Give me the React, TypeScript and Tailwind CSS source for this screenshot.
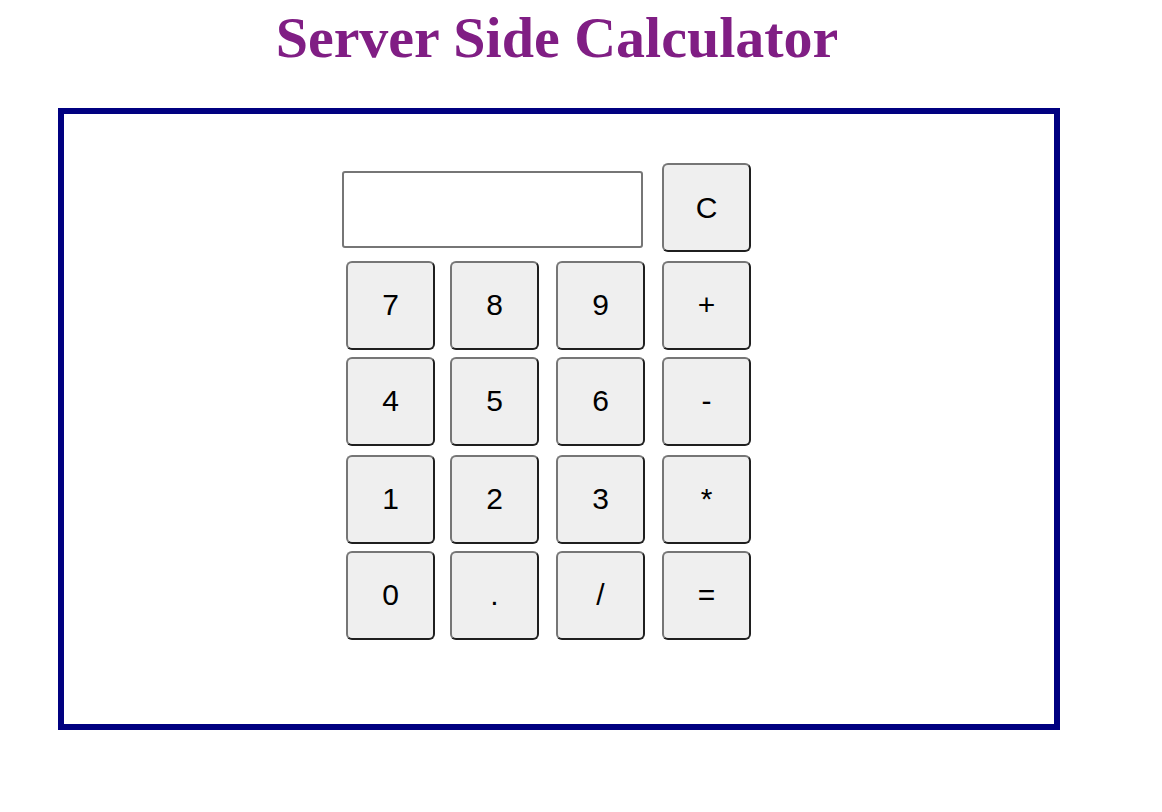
import React from "react";

const btn =
  "w-[89px] h-[89px] bg-[#efefef] border-2 border-t-[#767676] border-l-[#767676] border-b-[#1f1f1f] border-r-[#1f1f1f] rounded-[6px] text-[30px] text-black flex items-center justify-center font-['Liberation_Sans',Arial,sans-serif]";

const rows: string[][] = [
  ["7", "8", "9", "+"],
  ["4", "5", "6", "-"],
  ["1", "2", "3", "*"],
  ["0", ".", "/", "="],
];

const margins = ["ml-[4px]", "ml-[15px]", "ml-[17px]", "ml-[17px]"];
const rowTops = ["mt-[9px]", "mt-[7px]", "mt-[9px]", "mt-[7px]"];

export default function App() {
  return (
    <div className="min-h-screen w-full bg-white">
      <div className="ml-[58px] w-[1002px] pt-[1px]">
        <h1 className="text-center text-[58px] leading-[66px] font-bold text-[#801e84] font-['Liberation_Serif','Times_New_Roman',serif] mt-[4px] pr-[4px]">
          Server Side Calculator
        </h1>
        <div className="mt-[37px] h-[622px] border-[6px] border-[#000080]">
          <div className="pl-[278px] pt-[49px]">
            <div className="flex items-start">
              <input
                type="text"
                className="mt-[8px] w-[301px] h-[77px] border-2 border-[#767676] rounded-[3px] bg-white outline-none"
              />
              <button className={`${btn} ml-[19px] h-[88px]`}>C</button>
            </div>
            {rows.map((row, ri) => (
              <div key={ri} className={`flex ${rowTops[ri]}`}>
                {row.map((k, ki) => (
                  <button key={k} className={`${btn} ${margins[ki]} pb-[2px]`}>
                    {k}
                  </button>
                ))}
              </div>
            ))}
          </div>
        </div>
      </div>
    </div>
  );
}
